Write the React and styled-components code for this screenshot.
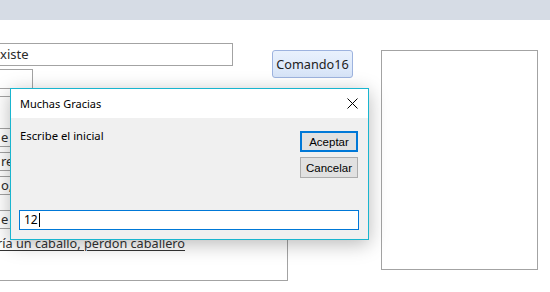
import React from 'react';
import styled, { createGlobalStyle } from 'styled-components';

const Global = createGlobalStyle`
    html, body {
        margin: 0;
        padding: 0;
        background: #fff;
        overflow: hidden;
    }
    body {
        font-family: "Noto Sans", "Open Sans", sans-serif;
    }
`;

const Screen = styled.div`
    position: relative;
    width: 550px;
    height: 292px;
    overflow: hidden;
    background: #fff;
`;

const TopBar = styled.div`
    height: 20px;
    background: #d6dce5;
`;

const Canvas = styled.div`
    display: flex;
    align-items: flex-start;
`;

const LeftColumn = styled.div`
    display: flex;
    flex-direction: column;
    width: 308px;
    margin-left: -20px;
    flex-shrink: 0;
`;

const Field = styled.div`
    box-sizing: border-box;
    width: ${p => p.w}px;
    height: ${p => p.h}px;
    margin-top: ${p => p.mt}px;
    border: 1px solid #a3a3a3;
    background: #fff;
    padding-left: ${p => p.pl || 18}px;
    font-size: ${p => p.fs || 13}px;
    line-height: ${p => p.h - 2}px;
    color: #2b2b2b;
    white-space: nowrap;
    overflow: hidden;
`;

const Frame = styled.div`
    box-sizing: border-box;
    width: 308px;
    height: 185px;
    margin-top: 7px;
    border: 1px solid #a3a3a3;
    display: flex;
    flex-direction: column;
`;

const UnderLabel = styled.div`
    margin-top: 6px;
    margin-left: 16px;
    font-size: 12.7px;
    line-height: 17px;
    color: #333;
    text-decoration: underline;
    text-underline-offset: 2px;
    white-space: nowrap;
`;

const Command = styled.button`
    box-sizing: border-box;
    width: 81px;
    height: 28px;
    margin-top: 30px;
    margin-left: -16px;
    flex-shrink: 0;
    padding: 0;
    border: 1px solid #9db3df;
    border-radius: 3px;
    background: linear-gradient(#e9f1fd, #d7e4f8);
    font-family: "Noto Sans", "Open Sans", sans-serif;
    font-size: 12.7px;
    color: #222;
`;

const SideBox = styled.div`
    box-sizing: border-box;
    width: 157px;
    height: 220px;
    margin-top: 30px;
    margin-left: 28px;
    border: 1px solid #a3a3a3;
    background: #fff;
    flex-shrink: 0;
`;

const Dialog = styled.div`
    position: absolute;
    left: 10px;
    top: 88px;
    width: 359px;
    height: 152px;
    box-sizing: border-box;
    border: 1px solid #19b5cf;
    background: #f0f0f0;
    box-shadow: 0 4px 18px rgba(0, 0, 0, 0.28);
    display: flex;
    flex-direction: column;
`;

const TitleBar = styled.div`
    height: 29px;
    background: #fff;
    display: flex;
    align-items: center;
    justify-content: space-between;
    padding: 0 10px 0 9px;
    font-size: 11px;
    color: #000;
`;

const CloseIcon = styled.svg`
    width: 11px;
    height: 11px;
    display: block;
`;

const Body = styled.div`
    flex: 1;
    display: flex;
    flex-direction: column;
    padding: 10px 9px 9px 8px;
`;

const Prompt = styled.div`
    display: flex;
    justify-content: space-between;
    align-items: flex-start;
`;

const PromptText = styled.div`
    margin-left: 1px;
    font-size: 11.3px;
    line-height: 16px;
    color: #000;
`;

const Buttons = styled.div`
    display: flex;
    flex-direction: column;
    gap: 5px;
    margin-top: 3px;
    margin-right: 1px;
`;

const DlgButton = styled.button`
    box-sizing: border-box;
    width: 58px;
    height: 21px;
    padding: 0;
    background: #e1e1e1;
    border: ${p => (p.primary ? '2px solid #0078d7' : '1px solid #adadad')};
    font-family: "Liberation Sans", Arial, sans-serif;
    font-size: 11.5px;
    color: #000;
`;

const Input = styled.div`
    margin-top: auto;
    box-sizing: border-box;
    height: 20px;
    border: 1px solid #0078d7;
    background: #fff;
    padding-left: 4px;
    font-size: 12px;
    line-height: 18px;
    color: #000;
    display: flex;
    align-items: center;
`;

const Caret = styled.span`
    display: inline-block;
    width: 1px;
    height: 14px;
    background: #000;
    margin-left: 1px;
`;

const rows = [
    { text: 'e', mt: 31 },
    { text: 're', mt: 5 },
    { text: 'o,', mt: 5 },
    { text: 'e l', mt: 15 },
];

export default function App() {
    return (
        <Screen>
            <Global />
            <TopBar />
            <Canvas>
                <LeftColumn>
                    <Field w={253} h={23} mt={23} pl={19}>xiste</Field>
                    <Field w={53} h={20} mt={3} />
                    <Frame>
                        {rows.map((r, i) => (
                            <Field key={i} w={200} h={19} mt={r.mt} pl={19}>{r.text}</Field>
                        ))}
                        <UnderLabel>ría un caballo, perdon caballero</UnderLabel>
                    </Frame>
                </LeftColumn>
                <Command>Comando16</Command>
                <SideBox />
            </Canvas>

            <Dialog>
                <TitleBar>
                    <span>Muchas Gracias</span>
                    <CloseIcon viewBox="0 0 11 11">
                        <path d="M0.5 0.5 L10.5 10.5 M10.5 0.5 L0.5 10.5" stroke="#000" strokeWidth="1" fill="none" />
                    </CloseIcon>
                </TitleBar>
                <Body>
                    <Prompt>
                        <PromptText>Escribe el inicial</PromptText>
                        <Buttons>
                            <DlgButton primary>Aceptar</DlgButton>
                            <DlgButton>Cancelar</DlgButton>
                        </Buttons>
                    </Prompt>
                    <Input>12<Caret /></Input>
                </Body>
            </Dialog>
        </Screen>
    );
}
